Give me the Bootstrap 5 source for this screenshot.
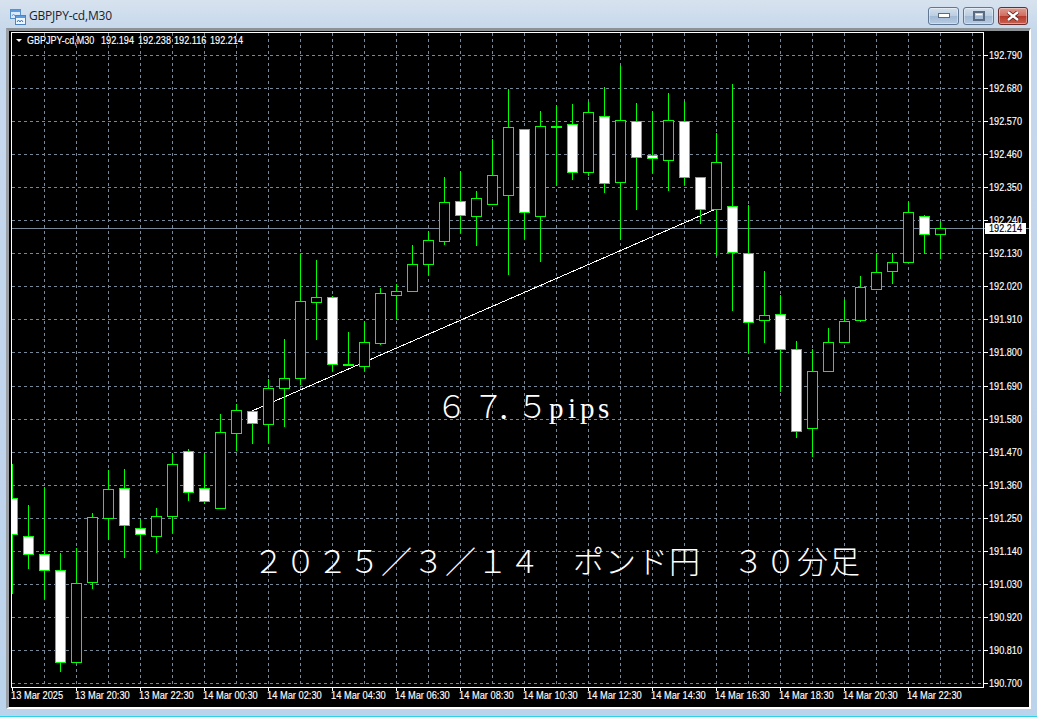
<!DOCTYPE html>
<html lang="ja">
<head>
<meta charset="utf-8">
<title>GBPJPY-cd,M30</title>
<link rel="stylesheet" href="https://cdn.jsdelivr.net/npm/bootstrap@5.3.0/dist/css/bootstrap.min.css">
<style>
html,body{height:100%;overflow:hidden;background:#bcd3ec}
.mtwin{height:717px;width:1037px;background:linear-gradient(180deg,#d7e2ee 0,#c6d8ec 30px,#bcd3ec 100%);border-bottom:1px solid #2cd3e8}
.mtbar{height:28px;padding:0 9px 0 10px}
.mticon{margin-top:6px}
.mttitle{font:12px "Open Sans","Liberation Sans",sans-serif;color:#17222e;letter-spacing:-.2px;margin-left:3px;margin-top:3px}
.mtbtn{width:31px;height:18px;padding:0;margin:4px 0 0 4px;border:1px solid #5f7894;border-radius:3px;background:linear-gradient(180deg,#d3dfec 0,#bccee2 48%,#a3bad5 52%,#b6cbe2 100%);box-shadow:inset 0 0 0 1px rgba(255,255,255,.4);line-height:0}
.mtbtn-close{width:30px;border-color:#6b2c2c;background:linear-gradient(180deg,#dd9a90 0,#cf6f62 48%,#b63a2c 52%,#c9604f 100%)}
.mtbtn svg{display:block;margin:auto}
.mtwell{width:1025px;height:681px;margin-left:6px;border-top:3px solid #8d9297;border-left:3px solid #9aa0a6;border-right:2px solid #fff;border-bottom:2px solid #fff;background:#000}
.mtchart{display:block;width:1020px;height:676px}
.tx{font-family:"Liberation Sans",sans-serif;font-size:11px;fill:#fff;stroke:#fff;stroke-width:.15px}
.big{font-family:"Noto Sans CJK JP",sans-serif;font-size:31px;font-weight:300;fill:#fff}
.bigsm{font-family:"Liberation Serif",serif;font-size:29px;fill:#fff}
</style>
</head>
<body>
<div class="mtwin d-flex flex-column">
  <div class="mtbar d-flex align-items-center flex-shrink-0">
    <svg width="16" height="16" viewBox="0 0 16 16" class="flex-shrink-0 mticon"><rect x=".5" y=".5" width="10" height="9" fill="#dbeafa" stroke="#5b8fc9"/><rect x="1" y="1" width="9" height="2" fill="#5b9ade"/><rect x="5.5" y="6.5" width="10" height="9" fill="#eef6fd" stroke="#4c83c4"/><rect x="6" y="7" width="9" height="2" fill="#5b9ade"/><path d="M7 13l1.500-2 1.500 2 1.500-2 1.500 2" fill="none" stroke="#3f74b5"/><path d="M2 7l1.500-2L5 7" fill="none" stroke="#6aa0dc"/></svg>
    <span class="mttitle flex-grow-1">GBPJPY-cd,M30</span>
    <button type="button" class="btn mtbtn" aria-label="minimize"><svg width="12" height="6" viewBox="0 0 12 6"><rect x=".5" y=".5" width="11" height="4" fill="#fff" stroke="#5a6b80"/></svg></button>
    <button type="button" class="btn mtbtn" aria-label="maximize"><svg width="12" height="10" viewBox="0 0 12 10"><rect x="1" y="1" width="10" height="8" fill="none" stroke="#5a6b80" stroke-width="2"/><path d="M3 3.500h6" stroke="#fff"/></svg></button>
    <button type="button" class="btn mtbtn mtbtn-close" aria-label="close"><svg width="14" height="10" viewBox="0 0 14 10"><path d="M2 1l10 8M12 1L2 9" stroke="#5a1f1a" stroke-width="4"/><path d="M2 1l10 8M12 1L2 9" stroke="#fff" stroke-width="2.400"/></svg></button>
  </div>
  <div class="mtwell flex-shrink-0">
    <svg class="mtchart" viewBox="9 31 1020 676" xmlns="http://www.w3.org/2000/svg">
      <defs><clipPath id="plot"><rect x="12" y="33" width="971" height="654"/></clipPath></defs>
      <g id="grid" shape-rendering="crispEdges"></g>
      <line x1="252" y1="411" x2="716" y2="209" stroke="#fff" stroke-width="1" shape-rendering="crispEdges"/>
      <g id="candles" clip-path="url(#plot)" shape-rendering="crispEdges"></g>
      <g id="axes" shape-rendering="crispEdges"></g>
      <path d="M16 39h6l-3 3z" fill="#fff"/>
      <text class="tx" transform="translate(27 44) scale(.82 1)">GBPJPY-cd,M30</text>
      <text class="tx" transform="translate(101 44) scale(.83 1)">192.194</text>
      <text class="tx" transform="translate(138 44) scale(.83 1)">192.238</text>
      <text class="tx" transform="translate(174 44) scale(.83 1)">192.116</text>
      <text class="tx" transform="translate(210 44) scale(.83 1)">192.214</text>
      <text class="big" y="418" x="436 473 497 517">６７．５</text>
      <text class="bigsm" y="418" x="549 568 580 598">pips</text>
      <text class="big" y="573" x="253 285 317 349 381 413 445 477 509 541 573 605 637 669 701 733 765 797 829">２０２５／３／１４　ポンド円　３０分足</text>
      <g id="prices"></g>
      <rect x="985" y="223" width="41" height="11" fill="#fff"/>
      <text class="tx" transform="translate(989 232) scale(.83 1)" style="fill:#000;stroke:#000">192.214</text>
      <g id="dates"></g>
    </svg>
  </div>
</div>
<script>
const NS='http://www.w3.org/2000/svg';
function el(parent,name,attrs,text){const e=document.createElementNS(NS,name);for(const k in attrs)e.setAttribute(k,attrs[k]);if(text)e.textContent=text;document.getElementById(parent).appendChild(e);}
const ys=[55,88,121,154,187,220,253,286,319,352,386,419,452,485,518,551,584,617,650,683];
const ps=['192.790','192.680','192.570','192.460','192.350','192.240','192.130','192.020','191.910','191.800','191.690','191.580','191.470','191.360','191.250','191.140','191.030','190.920','190.810','190.700'];
const GC='#778899';
ys.forEach((y,i)=>{
  el('grid','line',{x1:12,x2:983,y1:y+.5,y2:y+.5,stroke:GC,'stroke-dasharray':'3 3'});
  el('axes','line',{x1:984,x2:988,y1:y+.5,y2:y+.5,stroke:'#fff'});
  el('prices','text',{class:'tx',transform:`translate(989 ${y+4}) scale(.83 1)`},ps[i]);
});
for(let x=44;x<=972;x+=32)el('grid','line',{x1:x+.5,x2:x+.5,y1:33,y2:687,stroke:GC,'stroke-dasharray':'3 3'});
el('grid','line',{x1:12,x2:1029,y1:228.5,y2:228.5,stroke:GC});
el('axes','path',{d:'M11.5 32.5H983.5V687.5H11.5Z',fill:'none',stroke:'#fff'});
const ds=['13 Mar 2025','13 Mar 20:30','13 Mar 22:30','14 Mar 00:30','14 Mar 02:30','14 Mar 04:30','14 Mar 06:30','14 Mar 08:30','14 Mar 10:30','14 Mar 12:30','14 Mar 14:30','14 Mar 16:30','14 Mar 18:30','14 Mar 20:30','14 Mar 22:30'];
ds.forEach((d,i)=>{
  const x=12+64*i;
  el('axes','line',{x1:x+.5,x2:x+.5,y1:688,y2:691,stroke:'#fff'});
  el('dates','text',{class:'tx',transform:`translate(${x-1} 699) scale(.845 1)`},d);
});
/* wickTop, wickBottom, bodyTop, bodyBottom, filled */
const c=[[464,593,498,534,1],[505,568,536,554,1],[487,598,554,570,1],[553,671,570,662,1],[548,662,583,662,0],[513,588,517,582,0],[470,539,489,518,0],[469,557,488,525,1],[519,569,528,534,1],[508,552,516,536,0],[453,532,464,516,0],[449,500,451,492,1],[453,503,488,501,1],[414,508,432,508,0],[404,450,410,433,0],[411,443,411,423,1],[379,442,388,424,0],[339,426,378,388,0],[254,384,301,378,0],[260,339,297,302,0],[296,370,297,364,1],[332,365,364,365,1],[321,370,342,366,0],[288,344,293,343,0],[284,318,291,295,0],[245,291,264,291,0],[231,274,240,264,0],[177,244,202,241,0],[171,232,201,215,1],[191,245,198,216,0],[139,204,175,204,0],[89,274,127,195,0],[129,238,129,212,1],[111,261,126,216,0],[105,185,126,127,1],[104,179,124,172,1],[102,175,112,172,0],[87,192,116,183,1],[65,239,120,182,0],[103,209,121,157,1],[111,172,155,158,1],[93,190,120,160,0],[101,184,121,177,1],[177,223,177,209,1],[133,255,162,209,0],[84,310,206,252,1],[205,352,253,322,1],[271,342,315,320,0],[295,391,314,349,1],[341,437,349,431,1],[349,456,371,428,0],[328,371,342,371,0],[300,342,321,342,0],[276,321,287,320,0],[253,289,272,289,0],[253,283,262,271,0],[202,262,212,262,0],[215,253,216,234,1],[221,258,228,234,0]];
const G='#00ff00';
c.forEach((k,i)=>{
  const x=12+16*i;
  el('candles','line',{x1:x+.5,x2:x+.5,y1:k[0],y2:k[1]+1,stroke:G});
  el('candles','rect',{x:x-4.5,y:k[2]+.5,width:10,height:Math.max(k[3]-k[2],0),fill:k[4]?'#fff':'#000',stroke:G});
});
</script>
<script src="https://cdn.jsdelivr.net/npm/bootstrap@5.3.0/dist/js/bootstrap.bundle.min.js"></script>
</body>
</html>
